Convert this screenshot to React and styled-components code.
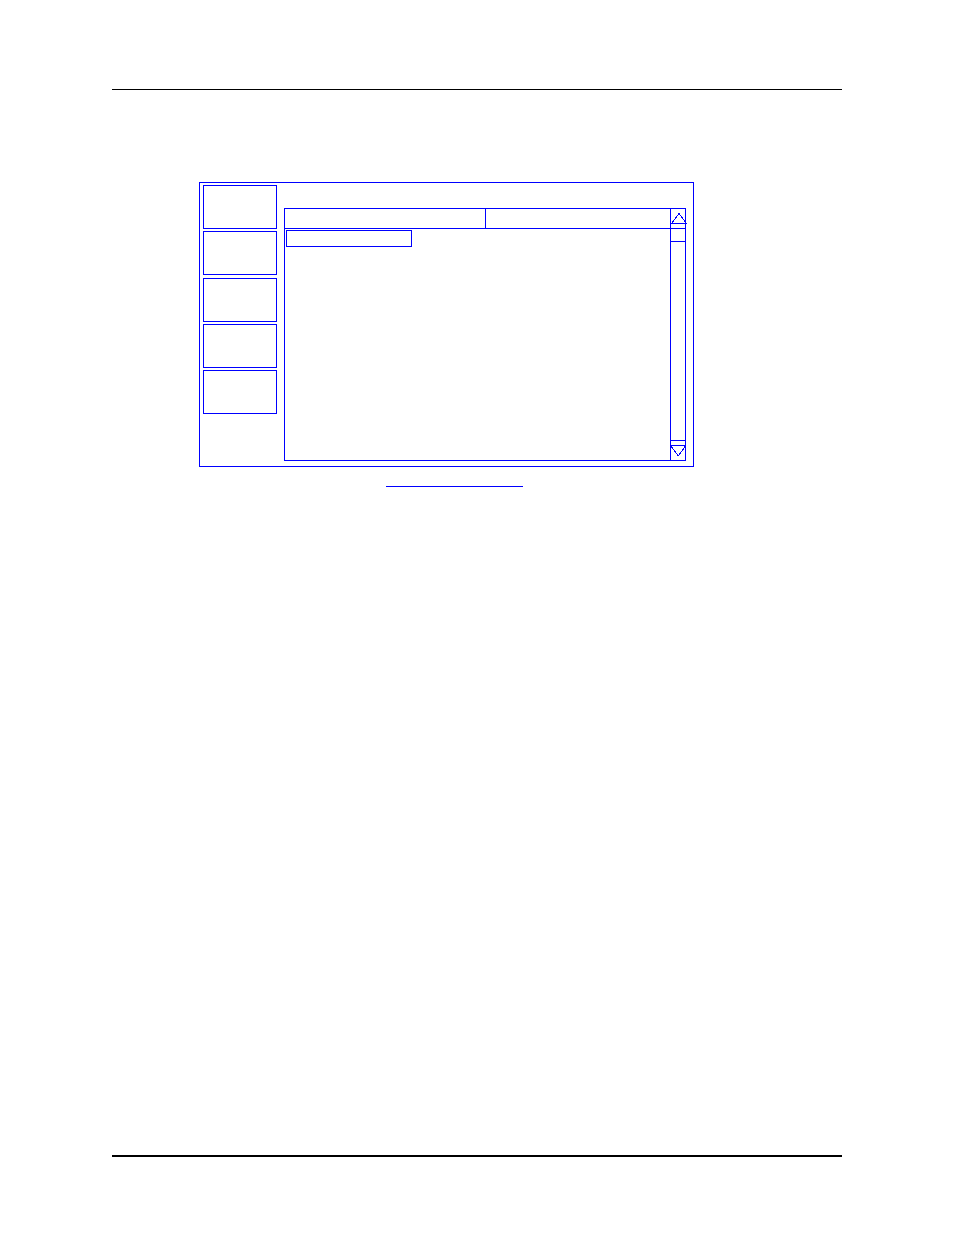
import React from "react";
import styled, { createGlobalStyle } from "styled-components";

const LINE = "#0000ff";

const GlobalStyle = createGlobalStyle`
  * { box-sizing: border-box; }
  body {
    margin: 0;
    background: #ffffff;
    color: #000000;
    font-family: "Liberation Sans", Arial, sans-serif;
  }
`;

const Page = styled.div`
  display: flex;
  flex-direction: column;
  min-height: 100vh;
  padding: 89px 112px 78px;
`;

const Header = styled.header`
  border-top: 1px solid #000000;
`;

const Footer = styled.footer`
  border-top: 2px solid #000000;
`;

const Figure = styled.figure`
  flex: 1;
  margin: 0;
  padding: 92px 148px 0 87px;
`;

const Screen = styled.section`
  display: flex;
  gap: 7px;
  border: 1px solid ${LINE};
  padding: 2px 7px 5px 3px;
`;

const Menu = styled.nav`
  display: flex;
  flex-direction: column;
  justify-content: space-between;
  flex: none;
  width: 74px;
  height: 229px;
`;

const MenuButton = styled.button`
  height: 44px;
  padding: 0;
  border: 1px solid ${LINE};
  background: none;
`;

const Panel = styled.div`
  display: flex;
  flex: 1;
  min-width: 0;
  margin-top: 23px;
  border: 1px solid ${LINE};
`;

const ListArea = styled.div`
  flex: 1;
  min-width: 0;
  min-height: 251px;
`;

const List = styled.table`
  width: 100%;
  table-layout: fixed;
  border-spacing: 0;
`;

const Heading = styled.th`
  width: ${(p) => p.$width || "auto"};
  height: 20px;
  padding: 0;
  border-bottom: 1px solid ${LINE};
  border-right: ${(p) => (p.$divided ? `1px solid ${LINE}` : "none")};
`;

const Cell = styled.td`
  padding: 1px;
`;

const SelectedItem = styled.button`
  display: block;
  width: 126px;
  height: 17px;
  padding: 0;
  border: 1px solid ${LINE};
  background: none;
`;

const ScrollBar = styled.div`
  display: flex;
  flex-direction: column;
  flex: none;
  width: 15px;
  border-left: 1px solid ${LINE};
`;

const ScrollButton = styled.button`
  display: flex;
  align-items: flex-start;
  height: ${(p) => p.$height};
  padding: ${(p) => p.$padding || "0"};
  border: 0;
  border-bottom: ${(p) => (p.$ruled ? `1px solid ${LINE}` : "0")};
  background: none;
`;

const Arrow = styled.svg`
  display: block;
  flex: none;
  overflow: visible;
  fill: none;
  stroke: ${LINE};
  shape-rendering: crispEdges;
`;

const Thumb = styled.div`
  height: 13px;
  border-bottom: 1px solid ${LINE};
`;

const Track = styled.div`
  flex: 1;
`;

const TrackEnd = styled.div`
  height: 6px;
  border: solid ${LINE};
  border-width: 1px 0;
`;

const Caption = styled.figcaption`
  display: flex;
  justify-content: center;
  padding-left: 16px;
`;

const CaptionLink = styled.a`
  width: 137px;
  height: 20px;
  border-bottom: 1px solid ${LINE};
`;

const menuKeys = [1, 2, 3, 4, 5];

export default function App() {
  return (
    <>
      <GlobalStyle />
      <Page>
        <Header />
        <Figure>
          <Screen>
            <Menu aria-label="Menu">
              {menuKeys.map((key) => (
                <MenuButton key={key} type="button" aria-label={`Menu key ${key}`} />
              ))}
            </Menu>
            <Panel>
              <ListArea>
                <List aria-label="List">
                  <thead>
                    <tr>
                      <Heading scope="col" $width="201px" $divided />
                      <Heading scope="col" />
                    </tr>
                  </thead>
                  <tbody>
                    <tr>
                      <Cell>
                        <SelectedItem type="button" aria-label="Selected item" />
                      </Cell>
                      <Cell />
                    </tr>
                  </tbody>
                </List>
              </ListArea>
              <ScrollBar>
                <ScrollButton type="button" aria-label="Scroll up" $height="20px" $padding="4px 0 0" $ruled>
                  <Arrow width="16" height="11" viewBox="0 0 16 11" aria-hidden="true">
                    <path d="M0.5 10.5 L8 0.5 L15.5 10.5 M0 10.5 H16" />
                  </Arrow>
                </ScrollButton>
                <Thumb />
                <Track />
                <TrackEnd />
                <ScrollButton type="button" aria-label="Scroll down" $height="14px">
                  <Arrow width="15" height="11" viewBox="0 0 15 11" aria-hidden="true">
                    <path d="M0 0 L7.25 9.75 L14.5 0" />
                  </Arrow>
                </ScrollButton>
              </ScrollBar>
            </Panel>
          </Screen>
          <Caption>
            <CaptionLink href="#figure" aria-label="Figure caption" />
          </Caption>
        </Figure>
        <Footer />
      </Page>
    </>
  );
}
